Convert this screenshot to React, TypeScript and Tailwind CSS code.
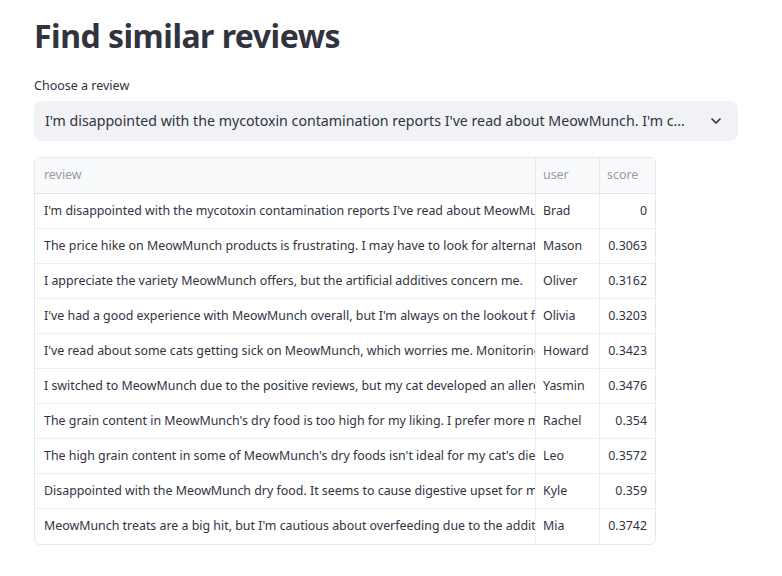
import { ChevronDown } from "lucide-react";

const ROWS = [
  { review: "I'm disappointed with the mycotoxin contamination reports I've read about MeowMunch. I'm considering other brands.", user: "Brad", score: "0" },
  { review: "The price hike on MeowMunch products is frustrating. I may have to look for alternatives soon.", user: "Mason", score: "0.3063" },
  { review: "I appreciate the variety MeowMunch offers, but the artificial additives concern me.", user: "Oliver", score: "0.3162" },
  { review: "I've had a good experience with MeowMunch overall, but I'm always on the lookout for healthier options.", user: "Olivia", score: "0.3203" },
  { review: "I've read about some cats getting sick on MeowMunch, which worries me. Monitoring my cat closely.", user: "Howard", score: "0.3423" },
  { review: "I switched to MeowMunch due to the positive reviews, but my cat developed an allergy to it.", user: "Yasmin", score: "0.3476" },
  { review: "The grain content in MeowMunch's dry food is too high for my liking. I prefer more meat.", user: "Rachel", score: "0.354" },
  { review: "The high grain content in some of MeowMunch's dry foods isn't ideal for my cat's diet.", user: "Leo", score: "0.3572" },
  { review: "Disappointed with the MeowMunch dry food. It seems to cause digestive upset for my cat.", user: "Kyle", score: "0.359" },
  { review: "MeowMunch treats are a big hit, but I'm cautious about overfeeding due to the additives.", user: "Mia", score: "0.3742" },
];

const COLS = "grid grid-cols-[501px_64px_57px]";

export default function App() {
  return (
    <div className="w-[782px] h-[576px] bg-white text-[#31333f] font-['Noto_Sans',sans-serif]">
      <div className="px-[34px] pt-[14px]">
        {/* Title */}
        <h1 className="font-bold text-[32px] leading-[44px] tracking-[-0.5px] text-[#31333f]">
          Find similar reviews
        </h1>

        {/* Select */}
        <div className="mt-[19px] text-[12.5px] leading-[18px]">Choose a review</div>
        <div className="mt-[6px] w-[704px] h-[40px] rounded-lg bg-[#f0f2f6] flex items-center pl-[11px] pr-[14px]">
          <span className="flex-1 truncate text-[14.2px]">
            I'm disappointed with the mycotoxin contamination reports I've read about MeowMunch. I'm considering other brands.
          </span>
          <ChevronDown size={16} strokeWidth={2.5} className="ml-4 text-[#31333f]" />
        </div>

        {/* Table */}
        <div className="mt-[16px] w-[622px] rounded-md border border-[#e6e8ec] overflow-hidden text-[12.4px]">
          <div className={`${COLS} h-[36px] bg-[#f8f9fb] text-[#9a9ca3] border-b border-[#e6e8ec]`}>
            <div className="px-[9px] flex items-center border-r border-[#e6e8ec]">review</div>
            <div className="px-[7px] flex items-center border-r border-[#e6e8ec]">user</div>
            <div className="px-[7px] flex items-center">score</div>
          </div>
          {ROWS.map((row, i) => (
            <div
              key={row.user}
              className={`${COLS} h-[35px] ${i < ROWS.length - 1 ? "border-b border-[#eceef1]" : ""}`}
            >
              <div className="px-[9px] flex items-center border-r border-[#eceef1] overflow-hidden whitespace-nowrap">
                {row.review}
              </div>
              <div className="px-[7px] flex items-center border-r border-[#eceef1] overflow-hidden whitespace-nowrap">
                {row.user}
              </div>
              <div className="pl-[6px] pr-[10px] flex items-center justify-end">{row.score}</div>
            </div>
          ))}
        </div>
      </div>
    </div>
  );
}
